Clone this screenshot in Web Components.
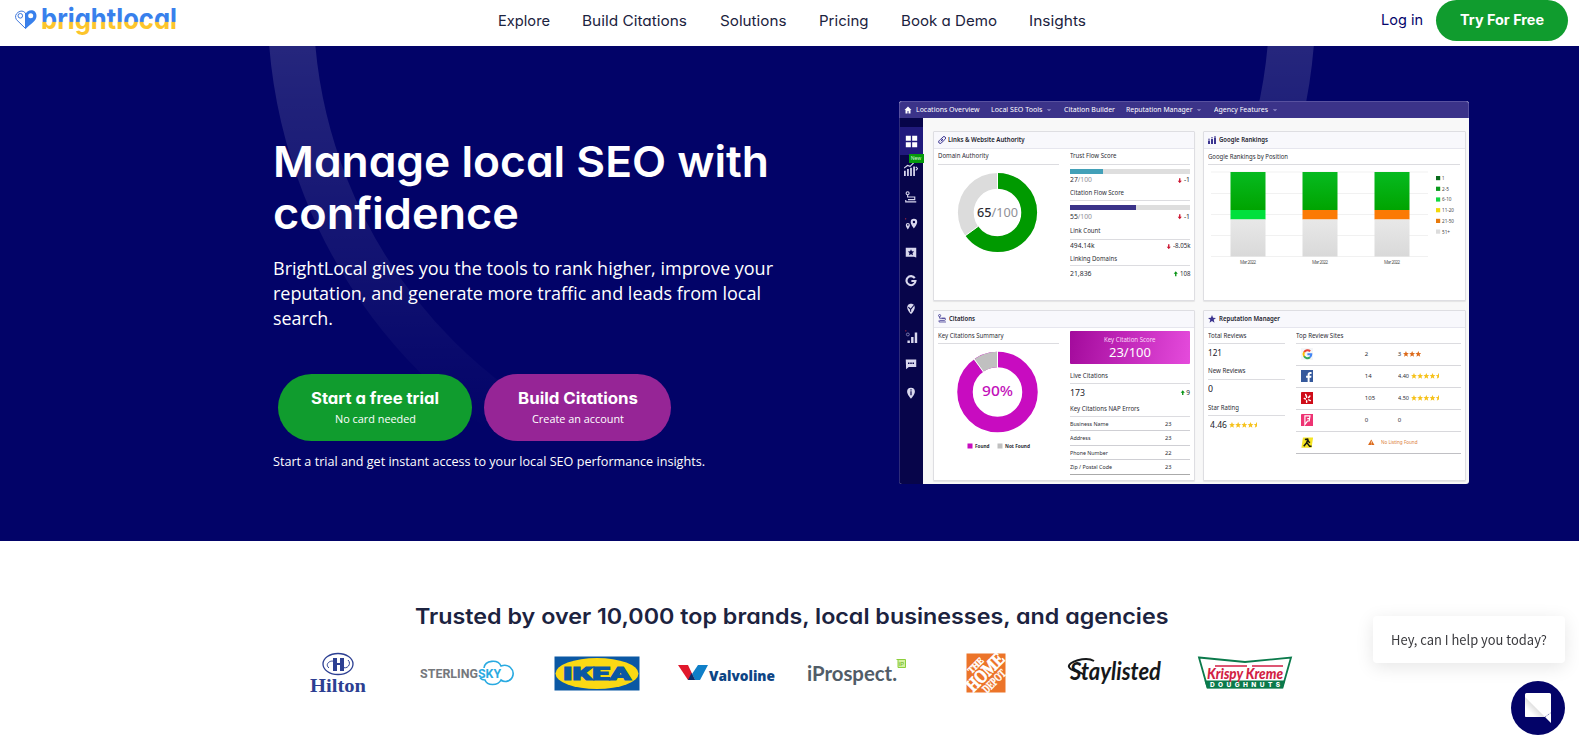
<!DOCTYPE html>
<html lang="en">
<head>
<meta charset="utf-8">
<title>BrightLocal</title>
<style>
    html, body {
        margin: 0;
        height: 748px;
        overflow: hidden;
        background: #fff;
    }
</style>
</head>
<body>
<bl-page></bl-page>

<script>
const HEADING_FONT = '"Inter", "Open Sans", sans-serif';
const BODY_FONT = '"Open Sans", "Noto Sans", sans-serif';

// Single line of text that is stretched to a set width
class FitText extends HTMLElement {
    constructor() {
        super();
        this.attachShadow({mode : 'open'});
        this.shadowRoot.innerHTML = `
        <style>
            :host { display: inline-block; white-space: nowrap; flex: none; }
            span { display: inline-block; transform-origin: 0 50%; }
        </style>
        <span><slot></slot></span>
        `;
    }

    connectedCallback() {
        const span = this.shadowRoot.querySelector('span');
        const target = parseFloat(this.getAttribute('w'));
        const natural = span.getBoundingClientRect().width;
        if (!target || !natural) return;
        span.style.transform = `scaleX(${target / natural})`;
        this.style.width = target + 'px';
    }
}
customElements.define('fit-text', FitText);

const ICONS = {
    home: '<path d="M8 1 1 8h2v7h4v-5h2v5h4V8h2z" fill="#fff"/>',
    caret: '<path d="M2 6h12l-6 5z" fill="#8f8ac6"/>',
    link: '<g fill="none" stroke="#3c3590" stroke-width="2" stroke-linecap="round"><path d="M6 10 9.500 6.500M7 5l3-3.200a3.200 3.200 0 0 1 4.500 4.500L11 9.500a3 3 0 0 1-3 .5M9 11.500l-2.500 2.700A3.200 3.200 0 0 1 2 9.700L5.200 6.500A3 3 0 0 1 8 6"/></g>',
    bars: '<g fill="#3c3590"><path d="M0 9h4v7H0zM6 6h4v10H6zM12 3h4v13h-4z"/><circle cx="2" cy="6.500" r="1.500"/><circle cx="8" cy="3.500" r="1.500"/><circle cx="14" cy="1.500" r="1.500"/></g>',
    routeDark: '<g fill="none" stroke="#3c3590" stroke-width="1.500"><circle cx="3" cy="3" r="2"/><path d="M3 5v3h9a2 2 0 0 1 0 4H3M7 8h7M2 12v3h13"/></g>',
    starDark: '<path d="m8 0 2.200 5.600 5.800.3-4.600 3.700L13 15.500 8 12.200l-5 3.300 1.600-5.900L0 5.900l5.800-.3z" fill="#3c3590"/>',
    up: '<path d="M8 1 2 8h4v7h4V8h4z" fill="#0a9416"/>',
    down: '<path d="M8 15 2 8h4V1h4v7h4z" fill="#cc1430"/>',
    warn: '<path d="M8 1 0 15h16z" fill="#dc6a1a"/><path d="M7.200 5.500h1.600v5H7.200zM7.200 11.700h1.600v1.600H7.200z" fill="#fff"/>',
    grid: '<path d="M1 1h6.200v6.200H1zM8.800 1H15v6.200H8.800zM1 8.800h6.200V15H1zM8.800 8.800H15V15H8.800z" fill="#fff"/>',
    trend: '<g fill="#d9d8ee"><path d="M0 10h2v6H0zM3.500 8h2v8h-2zM7 6.500h2V16H7zM10.500 5h2v11h-2z"/><path d="m0 7 4-3 3 1 4-4M13.500 5.500l2 2-2 2" fill="none" stroke="#d9d8ee" stroke-width="1.300"/></g>',
    route: '<g fill="none" stroke="#d9d8ee" stroke-width="1.500"><circle cx="3.500" cy="3" r="2"/><path d="M3.500 5v3H13v3.500H4M8 8h5M1 12v2.500h14"/></g>',
    pins: '<path d="M11 1a4 4 0 0 0-4 4c0 3 4 8 4 8s4-5 4-8a4 4 0 0 0-4-4zm0 2.500a1.500 1.500 0 1 1 0 3 1.500 1.500 0 0 1 0-3zM3.500 6A2.500 2.500 0 0 0 1 8.500C1 10.500 3.500 14 3.500 14S6 10.500 6 8.500A2.500 2.500 0 0 0 3.500 6zm0 1.500a1 1 0 1 1 0 2 1 1 0 0 1 0-2z" fill="#d9d8ee" fill-rule="evenodd"/><circle cx=".8" cy="1" r=".8" fill="#c8303c"/>',
    review: '<path d="M1 1h14v13l-3-1H1z" fill="#d9d8ee"/><path d="m8 3 1.200 2.700 3 .3-2.200 2 .7 3L8 9.500 5.300 11 6 8 3.800 6l3-.3z" fill="#07054a"/>',
    gLight: '<path d="M13 4.200A6 6 0 1 0 14 8H8.500" fill="none" stroke="#d9d8ee" stroke-width="2.800"/>',
    pinCheck: '<path d="M8 1C4 1 3 4 3 6c0 4 5 9 5 9s5-5 5-9c0-2-1-5-5-5z" fill="#d9d8ee"/><path d="m4.500 5.500 3 3L12 3M7.500 8.500v3" fill="none" stroke="#07054a" stroke-width="1.400"/>',
    signal: '<path d="M3 13h3v3H3zM7.500 8.500h3V16h-3zM12 3h3v13h-3z" fill="#d9d8ee"/><circle cx="3.500" cy="5.500" r="1.800" fill="none" stroke="#8d8bc0"/><circle cx="1" cy="1" r=".8" fill="#c8303c"/>',
    chat: '<path d="M1 2h14v10H5l-3.500 3z" fill="#d9d8ee"/><path d="M4 6h2v2H4zM7 6h2v2H7zM10 6h2v2h-2z" fill="#07054a"/>',
    info: '<path d="M8 1a5.200 5.200 0 0 0-5.200 5.200C2.800 10 8 15.500 8 15.500s5.200-5.500 5.200-9.300A5.200 5.200 0 0 0 8 1z" fill="#d9d8ee"/><path d="M7.200 3h1.600v1.600H7.200zM7.200 5.500h1.600V11H7.200z" fill="#07054a"/>',
    google: '<rect width="16" height="16" fill="#f4f5f7"/><g fill="none" stroke-width="2.500"><path d="M4 5.300A5 5 0 0 1 11.800 4.200" stroke="#ea4335"/><path d="M4 5.300a5 5 0 0 0 0 5.400" stroke="#fbbc05"/><path d="M4 10.700a5 5 0 0 0 7.500 1.200" stroke="#34a853"/><path d="M11.500 11.900A5 5 0 0 0 13.200 8.100H8.200" stroke="#4285f4"/></g>',
    facebook: '<rect width="16" height="16" fill="#35599c"/><path d="M8.500 16v-6H6.500V7.500h2V6c0-2.300 1.300-3.400 3.300-3.400h1.700V5h-1.200c-1 0-1.300.5-1.300 1.200v1.300h2.400l-.4 2.500h-2v6z" fill="#fff"/>',
    yelp: '<rect width="16" height="16" rx="1" fill="#cf0c18"/><g stroke="#fff" stroke-width="1.900" stroke-linecap="round"><path d="m6 3.200 1.300 3.600M4.200 8.200l1.600.8M9.800 7l1.600-1.800M10 10l2 1M7.200 11.200v1.800"/></g>',
    foursquare: '<rect width="16" height="16" rx="1" fill="#ee3373"/><path d="M5 13.500v-11h6.500L10.500 9H8.300zM8 6h3" fill="none" stroke="#fff" stroke-width="1.500"/>',
    walking: '<path d="M2.500 2h13l-2 13H.5z" fill="#f5e523"/><path d="m5 4.500 3.500-.5 1 3 2 1.500M8.500 5 7 9l-3.500 4M7.500 8.500l3.500 4.500h2.500" fill="none" stroke="#1b1b12" stroke-width="1.900"/>'
};

class UiIcon extends HTMLElement {
    connectedCallback() {
        this.shadow = this.attachShadow({mode : 'open'});
        const size = this.getAttribute('size') || 8;
        this.shadow.innerHTML = `
        <style>
            :host { display: block; flex: none; width: ${size}px; height: ${size}px; }
            svg { display: block; }
        </style>
        <svg width="${size}" height="${size}" viewBox="0 0 16 16">${ICONS[this.getAttribute('name')]}</svg>
        `;
    }
}
customElements.define('ui-icon', UiIcon);

// count can be a half, the last star is then drawn half wide
class StarRow extends HTMLElement {
    connectedCallback() {
        this.shadow = this.attachShadow({mode : 'open'});
        const count = parseFloat(this.getAttribute('count'));
        const color = this.getAttribute('color') || '#f6c21c';
        const step = 9.5;
        let stars = '';
        for (let i = 0; i < count; i++) {
            stars += `<path transform="translate(${i * step} 0)" d="m4.500 0 1.300 3.200 3.200.2-2.500 2.100.9 3.300-2.900-1.900-2.900 1.900.9-3.300L0 3.400l3.200-.2z"/>`;
        }
        const width = step * count;
        const scale = parseFloat(this.getAttribute('size') || 6) / step;
        this.shadow.innerHTML = `
        <style>
            :host { display: block; flex: none; }
            svg { display: block; fill: ${color}; }
        </style>
        <svg width="${width * scale}" height="${9 * scale}" viewBox="0 0 ${width} 9">${stars}</svg>
        `;
    }
}
customElements.define('star-row', StarRow);

class BlHeader extends HTMLElement {
    connectedCallback() {
        this.shadow = this.attachShadow({mode : 'open'});
        this.shadow.innerHTML = `
        <style>
            :host {
                display: block;
                height: 46px;
                background: #fff;
                font: 400 14.5px/20px ${HEADING_FONT};
                font-feature-settings: "cv11";
                color: #1c2340;
            }
            header { display: flex; align-items: flex-start; padding-left: 14px; }
            .logo { display: block; width: 484px; height: 46px; }
            nav { display: flex; gap: 32.4px; padding-top: 11px; width: 883px; }
            .login { padding-top: 10px; color: #04056b; width: 55px; }
            .cta {
                display: flex; align-items: center; justify-content: center;
                box-sizing: border-box; width: 132px; height: 41px; padding-bottom: 1px; border-radius: 21px;
                background: #109c2e; color: #fff; font-weight: 700; font-size: 14px;
            }
        </style>
        <header>
            <svg class="logo" viewBox="0 0 484 46">
                <defs>
                    <linearGradient id="split" gradientUnits="userSpaceOnUse" x1="0" y1="0" x2="0" y2="46">
                        <stop offset=".465" stop-color="#3880ec"/>
                        <stop offset=".49" stop-color="#fcc52c"/>
                    </linearGradient>
                </defs>
                <path d="M11.500 28.500 2.300 19.500a5.700 5.700 0 0 1 9.200-6.500z" fill="#fff" stroke="#3f78dc"/>
                <circle cx="6.300" cy="15.800" r="2.300" fill="none" stroke="#3f78dc"/>
                <path d="M11.500 29V14c2-5 11-5.500 11 2 0 5-6 8-11 13zM16.700 13.300a2.500 2.500 0 1 0 0 5 2.500 2.500 0 0 0 0-5z" fill="#3880ec" fill-rule="evenodd"/>
                <text x="27" y="28.800" font-family='Inter, sans-serif' font-weight="700" font-size="28" textLength="136" lengthAdjust="spacingAndGlyphs" fill="url(#split)">brightlocal</text>
            </svg>
            <nav>
                <fit-text w="52">Explore</fit-text>
                <fit-text w="105">Build Citations</fit-text>
                <fit-text w="66.500">Solutions</fit-text>
                <fit-text w="49.500">Pricing</fit-text>
                <fit-text w="96">Book a Demo</fit-text>
                <fit-text w="57">Insights</fit-text>
            </nav>
            <div class="login"><fit-text w="42">Log in</fit-text></div>
            <div class="cta"><fit-text w="84">Try For Free</fit-text></div>
        </header>
        `;
    }
}
customElements.define('bl-header', BlHeader);

class CtaButton extends HTMLElement {
    constructor() {
        super();
        this.attachShadow({mode : 'open'});
        this.shadowRoot.innerHTML = `
        <style>
            :host {
                display: flex; flex-direction: column; align-items: center;
                box-sizing: border-box; height: 67px; padding-top: 13px;
                border-radius: 34px; color: #fff;
                font: 700 16px/22px ${HEADING_FONT};
                font-feature-settings: "cv11";
            }
            .sub { font: 400 11.5px/20px ${BODY_FONT}; }
        </style>
        <slot></slot>
        <div class="sub"><slot name="sub"></slot></div>
        `;
    }
}
customElements.define('cta-button', CtaButton);

class DashCard extends HTMLElement {
    constructor() {
        super();
        this.attachShadow({mode : 'open'});
        this.shadowRoot.innerHTML = `
        <style>
            :host {
                display: flex; flex-direction: column; box-sizing: border-box;
                background: #fff; border: 1px solid #dedee2; border-radius: 1px;
                box-shadow: 0 1px 1px rgba(0, 0, 0, .08);
            }
            .head {
                display: flex; align-items: center; gap: 2.5px; flex: none;
                height: 16px; padding-left: 4px; background: #f8f8fc;
                border-bottom: 1px solid #e6e6ee; font-weight: 600; color: #22222c;
            }
            .body { display: flex; flex: 1; padding: 0 4px; }
        </style>
        <div class="head"><slot name="icon"></slot><slot name="title"></slot></div>
        <div class="body"><slot></slot></div>
        `;
    }
}
customElements.define('dash-card', DashCard);

class DashBoard extends HTMLElement {
    connectedCallback() {
        this.shadow = this.attachShadow({mode : 'open'});

        const bars = [[22.500, '#00e03c'], [94.500, '#fb7a04'], [166.500, '#fb7a04']].map(([x, color]) => `
            <rect x="${x}" y="7" width="35" height="38" fill="url(#green)"/>
            <rect x="${x}" y="45" width="35" height="9.500" fill="${color}"/>
            <rect x="${x}" y="54.500" width="35" height="37" fill="url(#gray)"/>
            <text x="${x + 9.500}" y="99" textLength="16" fill="#555">Mar 2022</text>`).join('');
        const grid = [7, 28.500, 49.500, 70.500, 91.500].map(y =>
            `<path d="M3 ${y}h217" stroke="#ebebeb" stroke-width=".7"/>`).join('');
        const legend = [['1', '#0a6b1c', 2.5], ['2-5', '#0a9a1c', 7], ['6-10', '#10d840', 9.5],
            ['11-20', '#f2d808', 12], ['21-50', '#e87a0c', 12], ['51+', '#dcdcdc', 8]].map(([label, color, w], i) => `
            <rect x="228" y="${11 + i * 10.7}" width="4.200" height="4.200" fill="${color}"/>
            <text x="234" y="${15 + i * 10.7}" textLength="${w}" lengthAdjust="spacingAndGlyphs" fill="#444">${label}</text>`).join('');

        const nap = [['Business Name', 38.5, 23], ['Address', 20.5, 23], ['Phone Number', 38, 22], ['Zip / Postal Code', 42, 23]]
            .map(([label, w, n]) => `<div class="nap"><fit-text w="${w}">${label}</fit-text><fit-text w="6.500">${n}</fit-text></div>`).join('');

        const sites = [
            ['google', '2', '3', 3, '#dc6a1a'],
            ['facebook', '14', '4.40', 4.5, '#f6c21c'],
            ['yelp', '105', '4.50', 4.5, '#f6c21c'],
            ['foursquare', '0', '0', 0, '']
        ].map(([icon, reviews, rating, stars, color]) => `
            <div class="site">
                <ui-icon name="${icon}" size="12.500"></ui-icon>
                <span class="reviews">${reviews}</span>
                <span class="rating">${rating.length > 1 ? `<fit-text w="11">${rating}</fit-text>` : rating}</span>
                ${stars ? `<star-row count="${stars}" color="${color}" size="6.200"></star-row>` : ''}
            </div>`).join('');

        this.shadow.innerHTML = `
        <style>
            :host {
                display: flex; flex-direction: column; box-sizing: border-box;
                width: 570px; height: 383px; overflow: hidden;
                border-radius: 3px; background: #f8f8f8;
                font: 400 6.8px/10px "Noto Sans", "Open Sans", sans-serif; color: #2c2c34;
            }
            .top {
                display: flex; align-items: center; height: 17px; flex: none; box-sizing: border-box;
                padding-left: 4px; color: #fff; background: #3b3389;
                border: 1px solid #58519f; border-bottom: 0; border-radius: 3px 3px 0 0;
            }
            .top ui-icon { margin-right: 3.5px; }
            .caret { margin: 0 0 0 4px; }
            .row { display: flex; flex: 1; }
            aside {
                display: flex; flex-direction: column; align-items: center; width: 24px; flex: none;
                box-sizing: border-box; padding: 9px 1px 0 0; background: #07054a; border-left: 1px solid #2d2b78;
            }
            aside > * { flex: none; }
            .active {
                display: flex; align-items: center; justify-content: center; box-sizing: border-box;
                width: 23px; height: 28px; padding-right: 1px; background: #211a7d; margin: 0 -1px 7px 0;
            }
            .new {
                position: absolute; margin: 27px 0 0 10px; width: 15px; height: 8.5px; padding: 0;
                background: #059a0c; color: #d8f5d8; font-size: 5px; line-height: 8px; text-align: center;
            }
            main {
                display: grid; grid-template: 170px 171px / 262.5px 263px;
                gap: 8.500px 8px; padding: 13px 0 0 9.5px;
            }
            .col { display: flex; flex-direction: column; }
            .left { width: 121px; }
            .right { width: 121.500px; margin-left: 11px; }
            .t { display: flex; align-items: center; box-sizing: border-box; border-bottom: 1px solid #dcdce0; flex: none; }
            .v { display: flex; align-items: center; justify-content: space-between; flex: none; }
            .v > span { display: flex; align-items: center; gap: 1px; }
            .bar { height: 5px; background: #dedede; flex: none; margin-top: 4.500px; }
            .bar div { height: 100%; }
            .dim { color: #909096; }
            .big { font-size: 8.500px; color: #22222a; }
            .score {
                display: flex; flex-direction: column; align-items: center; box-sizing: border-box;
                height: 33px; margin-top: 3.500px; padding-top: 4px; flex: none; color: #fbd8f8;
                background: linear-gradient(100deg, #a30a9c, #e54bdc); border-radius: 1px;
            }
            .score b { font: 400 13px/14px "Noto Sans", sans-serif; color: #fff; }
            .nap {
                display: flex; align-items: center; justify-content: space-between; box-sizing: border-box;
                height: 14.500px; padding: 1px 19px 0 0; border-bottom: 1px solid #cfcfd4; font-size: 6px; flex: none;
            }
            .nap:last-child { border-bottom-color: #aaa; }
            svg { display: block; }
            .site { display: flex; align-items: center; box-sizing: border-box; height: 22px; padding-left: 4.500px; border-bottom: 1px solid #d8d8dc; flex: none; font-size: 6px; }
            .site:last-child { border-bottom: 1.500px solid #c0c0c4; }
            .reviews { width: 33px; margin-left: 51.500px; }
            .rating { margin-right: 2px; }
        </style>
        <div class="top">
            <ui-icon name="home" size="8"></ui-icon>
            <fit-text w="63.500" style="margin-right:11.500px">Locations Overview</fit-text>
            <fit-text w="51.500">Local SEO Tools</fit-text><ui-icon class="caret" name="caret" size="6"></ui-icon>
            <fit-text w="51" style="margin:0 11px 0 8px">Citation Builder</fit-text>
            <fit-text w="66.500">Reputation Manager</fit-text><ui-icon class="caret" name="caret" size="6"></ui-icon>
            <fit-text w="54" style="margin-left:8px">Agency Features</fit-text><ui-icon class="caret" name="caret" size="6"></ui-icon>
        </div>
        <div class="row">
            <aside>
                <div class="active"><ui-icon name="grid" size="13"></ui-icon></div>
                <div class="new">New</div>
                <ui-icon name="trend" size="14"></ui-icon>
                <ui-icon name="route" size="12" style="margin-top:14.500px"></ui-icon>
                <ui-icon name="pins" size="13" style="margin-top:15px"></ui-icon>
                <ui-icon name="review" size="12" style="margin-top:16px"></ui-icon>
                <ui-icon name="gLight" size="12" style="margin-top:16.500px"></ui-icon>
                <ui-icon name="pinCheck" size="12" style="margin-top:16px"></ui-icon>
                <ui-icon name="signal" size="13" style="margin-top:15px"></ui-icon>
                <ui-icon name="chat" size="12" style="margin-top:14.500px"></ui-icon>
                <ui-icon name="info" size="12" style="margin-top:17px"></ui-icon>
            </aside>
            <main>
                <dash-card>
                    <ui-icon slot="icon" name="link" size="8"></ui-icon>
                    <fit-text slot="title" w="76.500">Links &amp; Website Authority</fit-text>
                    <div class="col left">
                        <div class="t" style="height:15.500px"><fit-text w="50.500">Domain Authority</fit-text></div>
                        <svg width="121" height="96" viewBox="0 0 121 96">
                            <circle cx="59.500" cy="47.500" r="31.700" fill="none" stroke="#dcdcdc" stroke-width="15.800"/>
                            <circle cx="59.500" cy="47.500" r="31.700" fill="none" stroke="#009a00" stroke-width="15.800" pathLength="100" stroke-dasharray="65 35" transform="rotate(-90 59.500 47.500)"/>
                            <path d="M59.500 24V7.500M40 61.500l-13.300 9.700" stroke="#fff"/>
                            <text x="39" y="52" font-size="13" textLength="41" lengthAdjust="spacingAndGlyphs" fill="#2c2c34"><tspan font-weight="500">65</tspan><tspan fill="#909096">/100</tspan></text>
                        </svg>
                    </div>
                    <div class="col right">
                        <div class="t" style="height:15.500px"><fit-text w="46.500">Trust Flow Score</fit-text></div>
                        <div class="bar"><div style="width:33px;background:#42a0b8"></div></div>
                        <div class="v" style="height:12.500px"><fit-text w="22">27<span class="dim">/100</span></fit-text><span><ui-icon name="down" size="5.500"></ui-icon>-1</span></div>
                        <div class="t" style="height:14px"><fit-text w="54">Citation Flow Score</fit-text></div>
                        <div class="bar"><div style="width:66px;background:#3b3389"></div></div>
                        <div class="v" style="height:13.500px"><fit-text w="22">55<span class="dim">/100</span></fit-text><span><ui-icon name="down" size="5.500"></ui-icon>-1</span></div>
                        <div class="t" style="height:16px"><fit-text w="30.500">Link Count</fit-text></div>
                        <div class="v" style="height:13.500px"><fit-text w="24.500">494.14k</fit-text><span><ui-icon name="down" size="5.500"></ui-icon><fit-text w="17.500">-8.05k</fit-text></span></div>
                        <div class="t" style="height:13px"><fit-text w="47">Linking Domains</fit-text></div>
                        <div class="v" style="height:15.500px"><fit-text w="21.500">21,836</fit-text><span><ui-icon name="up" size="5.500"></ui-icon><fit-text w="10.500">108</fit-text></span></div>
                    </div>
                </dash-card>

                <dash-card>
                    <ui-icon slot="icon" name="bars" size="8"></ui-icon>
                    <fit-text slot="title" w="49">Google Rankings</fit-text>
                    <div class="col" style="width:252px">
                        <div class="t" style="height:16px"><fit-text w="80">Google Rankings by Position</fit-text></div>
                        <svg width="252" height="110" viewBox="0 0 252 110" font-size="4.500">
                            <defs>
                                <linearGradient id="green" x2="0" y2="1"><stop stop-color="#06ba20"/><stop offset="1" stop-color="#00a400"/></linearGradient>
                                <linearGradient id="gray" x2="0" y2="1"><stop stop-color="#e8e8e8"/><stop offset="1" stop-color="#d9d9d9"/></linearGradient>
                            </defs>
                            ${grid}${bars}${legend}
                        </svg>
                    </div>
                </dash-card>

                <dash-card>
                    <ui-icon slot="icon" name="routeDark" size="8.500"></ui-icon>
                    <fit-text slot="title" w="26">Citations</fit-text>
                    <div class="col left">
                        <div class="t" style="height:16px;padding-top:1px"><fit-text w="65.500">Key Citations Summary</fit-text></div>
                        <svg width="121" height="112" viewBox="0 0 121 112">
                            <circle cx="59.500" cy="48" r="32.500" fill="none" stroke="#c80cc0" stroke-width="15.500"/>
                            <circle cx="59.500" cy="48" r="32.500" fill="none" stroke="#c0c0c0" stroke-width="15.500" pathLength="100" stroke-dasharray="10 90" transform="rotate(-126 59.500 48)"/>
                            <path d="M59.500 24V7M45.500 28l-10-13.800" stroke="#fff"/>
                            <text x="44" y="52" font-size="15" font-weight="500" textLength="31" lengthAdjust="spacingAndGlyphs" fill="#c210ba">90%</text>
                            <rect x="29.500" y="99.500" width="5" height="5" fill="#c80cc0"/>
                            <text x="37" y="104" font-size="5" font-weight="700" textLength="14.500" lengthAdjust="spacingAndGlyphs" fill="#2c2c34">Found</text>
                            <rect x="59.500" y="99.500" width="5" height="5" fill="#c0c0c0"/>
                            <text x="67" y="104" font-size="5" font-weight="700" textLength="25" lengthAdjust="spacingAndGlyphs" fill="#2c2c34">Not Found</text>
                        </svg>
                    </div>
                    <div class="col right">
                        <div class="score"><fit-text w="51.500">Key Citation Score</fit-text><b><fit-text w="42">23/100</fit-text></b></div>
                        <div class="t" style="height:20px;padding-top:5.500px"><fit-text w="38">Live Citations</fit-text></div>
                        <div class="v big" style="height:17px"><fit-text w="15">173</fit-text><span style="font-size:6.500px"><ui-icon name="up" size="5.500"></ui-icon>9</span></div>
                        <div class="t" style="height:15.500px;padding-top:1px"><fit-text w="69.500">Key Citations NAP Errors</fit-text></div>
                        ${nap}
                    </div>
                </dash-card>

                <dash-card>
                    <ui-icon slot="icon" name="starDark" size="8"></ui-icon>
                    <fit-text slot="title" w="61">Reputation Manager</fit-text>
                    <div class="col" style="width:77px">
                        <div class="t" style="height:16px;padding-top:1px"><fit-text w="38.500">Total Reviews</fit-text></div>
                        <div class="v big" style="height:18px"><fit-text w="14">121</fit-text></div>
                        <div class="t" style="height:18px;padding-top:2.500px"><fit-text w="37.500">New Reviews</fit-text></div>
                        <div class="v big" style="height:18px"><fit-text w="5">0</fit-text></div>
                        <div class="t" style="height:18px;padding-top:3px"><fit-text w="31">Star Rating</fit-text></div>
                        <div class="v big" style="height:19.500px;justify-content:flex-start;gap:2.500px;padding-left:1.500px"><fit-text w="17">4.46</fit-text><star-row count="4.5" size="6.200"></star-row></div>
                    </div>
                    <div class="col" style="width:165px;margin-left:11.500px">
                        <div class="t" style="height:16px;padding-top:1px"><fit-text w="47.500">Top Review Sites</fit-text></div>
                        ${sites}
                        <div class="site"><ui-icon name="walking" size="12.500"></ui-icon><ui-icon name="warn" size="6.500" style="margin:0 6px 0 55px"></ui-icon><fit-text w="36.500" style="color:#dc8038;font-size:5.500px">No Listing Found</fit-text></div>
                    </div>
                </dash-card>
            </main>
        </div>
        `;
    }
}
customElements.define('dash-board', DashBoard);

class BlHero extends HTMLElement {
    connectedCallback() {
        this.shadow = this.attachShadow({mode : 'open'});
        this.shadow.innerHTML = `
        <style>
            :host { display: block; position: relative; height: 495px; background: #020368; color: #fff; overflow: hidden; }
            .ring { position: absolute; left: 0; top: 0; }
            .content { position: relative; display: flex; align-items: flex-start; padding-left: 273px; }
            .copy { width: 626px; padding-top: 90px; }
            h1 {
                margin: 0; font: 600 43px/51.500px ${HEADING_FONT};
                font-feature-settings: "cv11";
            }
            h1 fit-text { display: block; }
            p { margin: 0; font: 400 18px/25px ${BODY_FONT}; }
            .intro { margin-top: 17px; }
            .buttons { display: flex; gap: 12px; margin: 43px 0 11px 5px; }
            .note { font-size: 13px; line-height: 18px; }
            dash-board { margin-top: 55px; }
        </style>
        <svg class="ring" width="1579" height="495" viewBox="0 46 1579 495">
            <defs>
                <linearGradient id="fade" gradientUnits="userSpaceOnUse" x1="0" y1="46" x2="0" y2="430">
                    <stop stop-color="#fff" stop-opacity=".14"/>
                    <stop offset="1" stop-color="#fff" stop-opacity="0"/>
                </linearGradient>
            </defs>
            <circle cx="791.500" cy="3" r="501" fill="none" stroke="url(#fade)" stroke-width="46"/>
        </svg>
        <div class="content">
            <div class="copy">
                <h1><fit-text w="496">Manage local SEO with</fit-text><fit-text w="246">confidence</fit-text></h1>
                <p class="intro">
                    <fit-text w="500">BrightLocal gives you the tools to rank higher, improve your</fit-text><br>
                    <fit-text w="488">reputation, and generate more traffic and leads from local</fit-text><br>
                    <fit-text w="60">search.</fit-text>
                </p>
                <div class="buttons">
                    <cta-button style="width:194px;background:#109c2e">
                        <fit-text w="128">Start a free trial</fit-text>
                        <fit-text slot="sub" w="81">No card needed</fit-text>
                    </cta-button>
                    <cta-button style="width:187px;background:#962596">
                        <fit-text w="120">Build Citations</fit-text>
                        <fit-text slot="sub" w="92">Create an account</fit-text>
                    </cta-button>
                </div>
                <p class="note"><fit-text w="432">Start a trial and get instant access to your local SEO performance insights.</fit-text></p>
            </div>
            <dash-board></dash-board>
        </div>
        `;
    }
}
customElements.define('bl-hero', BlHero);

// Every logo is drawn on a 100 x 42 board
const LOGOS = {
    hilton: `<g fill="none" stroke="#2c3f92"><ellipse cx="50" cy="12" rx="15" ry="10.500" stroke-width="1.300"/><path d="M41 16c-5-4 2-9 6-6M60 8c4 4-1 10-6 7"/></g>
        <path d="M45 6h4v5h3V6h4v13h-4v-6h-3v6h-4z" fill="#2c3f92"/>
        <text x="22" y="40" font-family="Liberation Serif, serif" font-weight="700" font-size="19" textLength="56" lengthAdjust="spacingAndGlyphs" fill="#2c3f92">Hilton</text>`,
    sterling: `<text x="3" y="25.500" font-family="Roboto, sans-serif" font-weight="700" font-size="13" textLength="58" lengthAdjust="spacingAndGlyphs" fill="#75787c">STERLING</text>
        <text x="61" y="25.500" font-family="Roboto, sans-serif" font-weight="700" font-size="13" textLength="23" lengthAdjust="spacingAndGlyphs" fill="#29aae1">SKY</text>
        <path d="M67 16c1-8 14-9 17-2 8-3 13 4 12 9-1 6-8 8-12 5-3 6-14 6-16 0-3 0-4-1-5-2" fill="none" stroke="#29aae1" stroke-width="1.600"/>`,
    ikea: `<path d="M7.500 4.500h85v34h-85z" fill="#0b58a4"/><ellipse cx="50" cy="21.500" rx="41.500" ry="15.500" fill="#fbd914"/>
        <text x="16" y="27.800" font-family="Roboto, sans-serif" font-weight="900" font-size="18" textLength="68" lengthAdjust="spacingAndGlyphs" fill="#0b58a4" stroke="#0b58a4" stroke-width="1.100">IKEA</text>`,
    valvoline: `<path d="M1 13h10l7 15h-7z" fill="#e1182c"/><path d="M31 13H21l-6 9 3 6h5z" fill="#0f7fc8"/><path d="M14.500 21 18 28h-7z" fill="#0a2f6c"/>
        <text x="32" y="28.500" font-family="Open Sans, sans-serif" font-weight="800" font-size="13.500" textLength="66" lengthAdjust="spacingAndGlyphs" fill="#0d4585">Valvoline</text>`,
    iprospect: `<text x="1" y="28.500" font-family="Lato, sans-serif" font-weight="700" font-size="20" textLength="90" lengthAdjust="spacingAndGlyphs" fill="#515d68">iProspect.</text>
        <path d="M90.500 7.500h9v8h-7.500V8" fill="#d5f1a0" stroke="#8ccf3c"/><text x="92.500" y="14" font-family="Lato, sans-serif" font-size="6.500" fill="#6db52c">iP</text>`,
    depot: `<path d="M30.500 1.500h39v39h-39z" fill="#ec7429"/>
        <g fill="#fff" font-family="Liberation Serif, serif" font-weight="700" transform="rotate(-45 50 21)">
            <text x="39" y="11.500" font-size="9.500" textLength="18" lengthAdjust="spacingAndGlyphs" stroke="#fff" stroke-width=".5">THE</text>
            <text x="27" y="25.800" font-size="18.500" textLength="46" lengthAdjust="spacingAndGlyphs" stroke="#fff" stroke-width=".8">HOME</text>
            <text x="36" y="36.500" font-size="12" textLength="28" lengthAdjust="spacingAndGlyphs" stroke="#fff" stroke-width=".4">DEPOT</text>
        </g>`,
    staylisted: `<text x="5" y="28" font-family="Lato, sans-serif" font-weight="700" font-style="italic" font-size="24" textLength="91" lengthAdjust="spacingAndGlyphs" fill="#16181a">Staylisted</text>
        <path d="M29 9C21 4 2 10 4 15s12 4 15 8" fill="none" stroke="#16181a" stroke-width="2"/>`,
    krispy: `<path d="M4 5.500 50 10l46-4.500-8.500 30h-75z" fill="#fff" stroke="#0b7a4b" stroke-width="1.800"/><path d="M9.500 28.500h80.500l-2.300 7.700H12z" fill="#0b7a4b"/>
        <path d="M20 14h32M57 14h31" stroke="#d21f45" stroke-width="1.500"/>
        <text x="12" y="26.500" font-family="Lato, sans-serif" font-weight="900" font-style="italic" font-size="15" textLength="76" lengthAdjust="spacingAndGlyphs" fill="#d21f45">Krispy Kreme</text>
        <text x="15" y="35" font-family="Inter, sans-serif" font-weight="800" font-size="6.500" textLength="70" fill="#fff">DOUGHNUTS</text>`
};

class BrandLogo extends HTMLElement {
    connectedCallback() {
        this.shadow = this.attachShadow({mode : 'open'});
        this.shadow.innerHTML = `
        <style>
            :host { display: flex; justify-content: center; width: 129.6px; }
            svg { overflow: visible; }
        </style>
        <svg width="100" height="42" viewBox="0 0 100 42">${LOGOS[this.getAttribute('name')]}</svg>
        `;
    }
}
customElements.define('brand-logo', BrandLogo);

class TrustedBrands extends HTMLElement {
    connectedCallback() {
        this.shadow = this.attachShadow({mode : 'open'});
        this.shadow.innerHTML = `
        <style>
            :host { display: block; padding-top: 60px; background: #fff; }
            h2 {
                margin: 0 0 20px 415px; font: 600 21.500px/31px ${HEADING_FONT};
                font-feature-settings: "cv11"; color: #1c2340;
            }
            .logos { display: flex; padding-left: 273px; }
        </style>
        <h2><fit-text w="753.500">Trusted by over 10,000 top brands, local businesses, and agencies</fit-text></h2>
        <div class="logos">${Object.keys(LOGOS).map(name => `<brand-logo name="${name}"></brand-logo>`).join('')}</div>
        `;
    }
}
customElements.define('trusted-brands', TrustedBrands);

class ChatWidget extends HTMLElement {
    connectedCallback() {
        this.shadow = this.attachShadow({mode : 'open'});
        this.shadow.innerHTML = `
        <style>
            :host {
                position: fixed; right: 14px; bottom: 13px;
                display: flex; flex-direction: column; align-items: flex-end; gap: 18px;
            }
            .bubble {
                display: flex; align-items: center; justify-content: center;
                box-sizing: border-box; width: 192px; height: 47px; padding-bottom: 2px; border-radius: 4px; background: #fff;
                box-shadow: 0 4px 18px rgba(0, 0, 0, .1);
                font: 400 13.500px/20px "Noto Sans CJK SC", sans-serif; color: #3a3a3e;
            }
            svg { display: block; }
        </style>
        <div class="bubble"><fit-text w="156">Hey, can I help you today?</fit-text></div>
        <svg width="54" height="54" viewBox="0 0 54 54">
            <defs>
                <linearGradient id="fold" x1="0" y1="1" x2=".6" y2=".4"><stop offset=".4" stop-color="#fff"/><stop offset="1" stop-color="#d4d4d4"/></linearGradient>
            </defs>
            <circle cx="27" cy="27" r="27" fill="#030368"/>
            <path d="M15.500 12h23a1.500 1.500 0 0 1 1.500 1.500V42l-6-6H15.500a1.500 1.500 0 0 1-1.500-1.500v-21a1.500 1.500 0 0 1 1.500-1.500z" fill="#fff"/>
            <path d="M14 16 34 36H15.500a1.500 1.500 0 0 1-1.500-1.500z" fill="url(#fold)"/>
            <path d="m34 36 5.500-4" stroke="#030368" stroke-width=".6" stroke-dasharray="1 1"/>
        </svg>
        `;
    }
}
customElements.define('chat-widget', ChatWidget);

class BlPage extends HTMLElement {
    connectedCallback() {
        this.shadow = this.attachShadow({mode : 'open'});
        this.shadow.innerHTML = `
        <style>
            :host { display: block; width: 1579px; height: 748px; }
        </style>
        <bl-header></bl-header>
        <bl-hero></bl-hero>
        <trusted-brands></trusted-brands>
        <chat-widget></chat-widget>
        `;
    }
}
customElements.define('bl-page', BlPage);
</script>
</body>
</html>
